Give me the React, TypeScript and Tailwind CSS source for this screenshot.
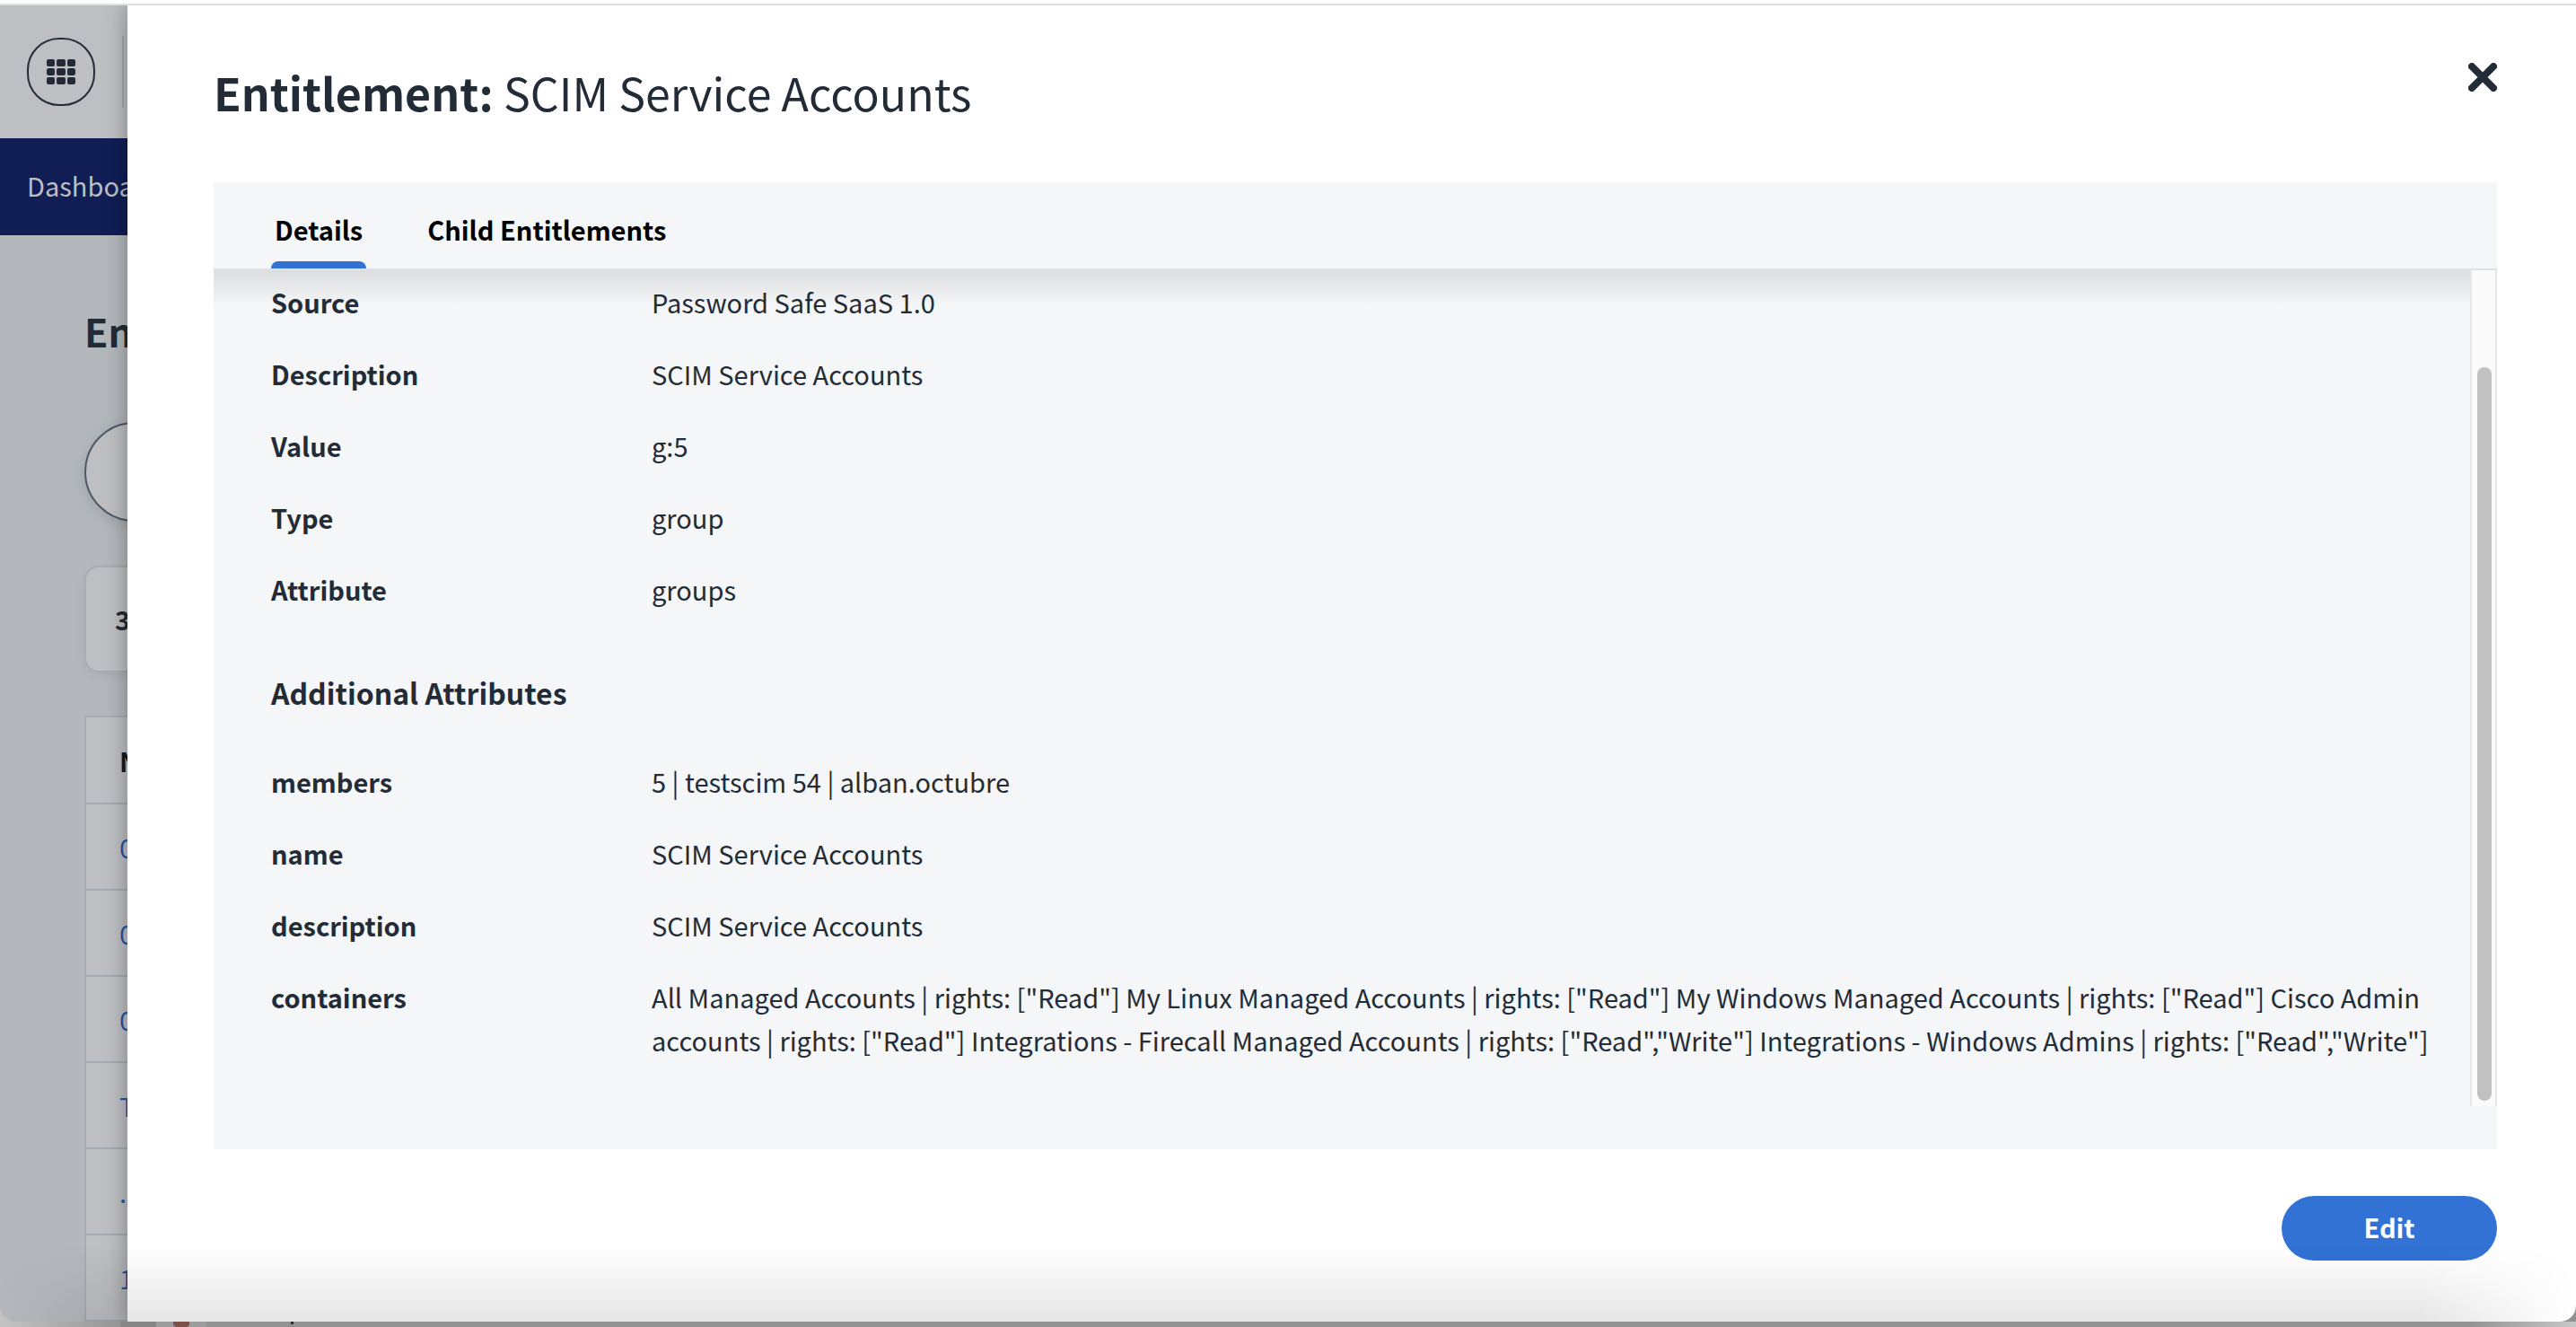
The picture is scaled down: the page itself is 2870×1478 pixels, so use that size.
import React from "react";

const details = [
  ["Source", "Password Safe SaaS 1.0"],
  ["Description", "SCIM Service Accounts"],
  ["Value", "g:5"],
  ["Type", "group"],
  ["Attribute", "groups"],
];

const attributes = [
  ["members", "5 | testscim 54 | alban.octubre"],
  ["name", "SCIM Service Accounts"],
  ["description", "SCIM Service Accounts"],
  [
    "containers",
    'All Managed Accounts | rights: ["Read"] My Linux Managed Accounts | rights: ["Read"] My Windows Managed Accounts | rights: ["Read"] Cisco Admin accounts | rights: ["Read"] Integrations - Firecall Managed Accounts | rights: ["Read","Write"] Integrations - Windows Admins | rights: ["Read","Write"]',
  ],
];

const entitlements = ["0", "0", "0", "T", ".", "1"];

function PropertyList({ items }: { items: string[][] }) {
  return (
    <dl className="flex flex-col gap-8">
      {items.map(([label, value]) => (
        <div key={label} className="flex">
          <dt className="w-[424px] shrink-0 font-bold">{label}</dt>
          <dd className="min-w-0 flex-1">{value}</dd>
        </div>
      ))}
    </dl>
  );
}

function GridIcon() {
  return (
    <svg width="32" height="28" viewBox="0 0 32 28" fill="currentColor" aria-hidden="true">
      {[0, 10, 20].map((y) =>
        [0, 11, 23].map((x) => <rect key={`${x}-${y}`} x={x} y={y} width={x === 11 ? 10 : 9} height="8" rx="2" />)
      )}
    </svg>
  );
}

function BackgroundPage() {
  return (
    <div className="flex w-[142px] shrink-0 flex-col overflow-hidden bg-[#b4b8bc] whitespace-nowrap">
      <header className="flex h-[148px] shrink-0 items-center gap-[30px] bg-[#bebfc3] pl-[30px]">
        <button
          aria-label="Applications"
          className="flex size-[76px] shrink-0 items-center justify-center rounded-[36px] border-2 border-[#232c36]"
        >
          <GridIcon />
        </button>
        <span className="h-20 w-[2px] shrink-0 bg-[#a7a9b0]" />
      </header>
      <nav className="flex h-[108px] shrink-0 items-center overflow-hidden bg-[#101e55] pb-1 pl-[30px] text-[#bebfc3]">
        <a href="#dashboard">Dashboard</a>
      </nav>
      <main className="flex min-h-0 flex-1 flex-col pl-[94px]">
        <h2 className="mt-[74px] mb-1 overflow-hidden text-[43px] leading-[64px] font-bold">Entitlements</h2>
        <input
          type="search"
          aria-label="Search entitlements"
          className="mt-[66px] h-[111px] w-96 shrink-0 rounded-full border-2 border-[#4d5967] bg-[#bebfc3] shadow-[0_4px_16px_rgba(0,0,0,0.12)]"
        />
        <div className="mt-[49px] flex h-[119px] w-96 shrink-0 items-center rounded-2xl border-2 border-[#a9abb2] bg-[#bebfc3] pb-[2px] pl-8 font-bold shadow-[0_4px_12px_rgba(0,0,0,0.06)]">
          34
        </div>
        <table className="mt-[48px] w-96 border-2 border-[#a9abb2] bg-[#bebfc3] text-left">
          <thead>
            <tr className="h-[97px] border-b-2 border-[#a5aab1]">
              <th className="pl-[37px] font-bold text-[#171a1e]">Name</th>
            </tr>
          </thead>
          <tbody>
            {entitlements.map((name, i) => (
              <tr key={i} className="h-24 border-b-2 border-[#a2aab3]">
                <td className="pl-[37px]">
                  <a href="#entitlement" className="text-[#2559a5]">
                    {name}
                  </a>
                </td>
              </tr>
            ))}
          </tbody>
        </table>
      </main>
    </div>
  );
}

function Drawer() {
  return (
    <section
      role="dialog"
      aria-labelledby="drawer-title"
      className="relative flex min-w-0 flex-1 flex-col bg-white pr-[88px] pl-24 shadow-[0_0_24px_rgba(0,0,0,0.35)]"
    >
      <div className="flex h-[197px] shrink-0 items-start justify-between pt-15">
        <h1 id="drawer-title" className="text-[50px] leading-[72px]">
          <span className="font-bold">Entitlement:</span> SCIM Service Accounts
        </h1>
        <button aria-label="Close" className="mt-1">
          <svg
            width="32"
            height="32"
            viewBox="0 0 32 32"
            fill="none"
            stroke="currentColor"
            strokeWidth="8"
            strokeLinecap="round"
            aria-hidden="true"
          >
            <path d="M4 4 28 28M28 4 4 28" />
          </svg>
        </button>
      </div>

      <div className="flex min-h-0 flex-1 flex-col bg-[#f4f6f8] pb-12">
        <div
          role="tablist"
          className="flex h-[98px] shrink-0 items-stretch gap-16 border-b-2 border-[#dfe2e8] px-16 font-bold text-black"
        >
          <button role="tab" aria-selected="true" className="flex flex-col justify-between pt-7">
            <span className="px-1">Details</span>
            <span className="h-2 w-full rounded-t-lg bg-[#3172d4]" />
          </button>
          <button role="tab" aria-selected="false" className="flex flex-col px-1 pt-7">
            Child Entitlements
          </button>
        </div>
        <div className="flex min-h-0 flex-1">
          <div
            role="tabpanel"
            className="min-w-0 flex-1 overflow-hidden bg-linear-to-b from-[#dcdddf] to-[#f4f6f8] to-[40px] pt-[11px] pr-8 pl-16"
          >
            <PropertyList items={details} />
            <h2 className="mt-[67px] mb-[51px] text-[32px] leading-[48px] font-bold">Additional Attributes</h2>
            <PropertyList items={attributes} />
          </div>
          <div className="flex w-[30px] shrink-0 flex-col items-center border-x-2 border-[#e8e8e9] bg-[#fafafa] pt-[108px] pb-[6px] pl-[2px]">
            <div className="w-4 flex-1 rounded-full bg-[#c1c1c1]" />
          </div>
        </div>
      </div>

      <footer className="flex h-[192px] shrink-0 items-start justify-end pt-[52px]">
        <button className="h-[72px] w-60 rounded-full bg-[#3172d4] pb-1 font-bold text-white">Edit</button>
      </footer>
    </section>
  );
}

function DesktopEdge() {
  return (
    <div className="absolute inset-x-0 bottom-0 flex h-10 items-end bg-linear-to-r from-[#c4c4c4] via-[#929292] via-5% to-[#929292]">
      <div className="flex h-[6px] flex-1">
        <div className="w-[134px]" />
        <div className="w-10 bg-[#858585]" />
        <div className="flex w-14 justify-center bg-[#9d9d9d]">
          <div className="w-[18px] rounded-b-sm bg-[#7d524a]" />
        </div>
        <div className="flex flex-1 justify-start pl-[94px]">
          <div className="h-[3px] w-[3px] bg-[#2b2b2b]" />
        </div>
        <div className="w-[120px] bg-linear-to-r from-[#929292] to-[#c8c8c8]" />
      </div>
    </div>
  );
}

export default function App() {
  return (
    <div className="relative flex h-screen flex-col overflow-hidden bg-[#929292] pb-[6px] font-['Noto_Sans_CJK_SC',sans-serif] text-[29px] leading-[48px] text-[#232c36]">
      <DesktopEdge />
      <div className="relative h-[6px] shrink-0 border-b-2 border-[#e0e0e0] bg-white" />
      <div className="relative flex min-h-0 flex-1 overflow-hidden rounded-b-[18px]">
        <BackgroundPage />
        <Drawer />
        <div className="pointer-events-none absolute inset-x-0 bottom-0 h-[84px] bg-linear-to-b from-black/0 to-black/10 [mask-image:linear-gradient(to_right,transparent,black_5%,black_94%,transparent)]" />
      </div>
    </div>
  );
}
